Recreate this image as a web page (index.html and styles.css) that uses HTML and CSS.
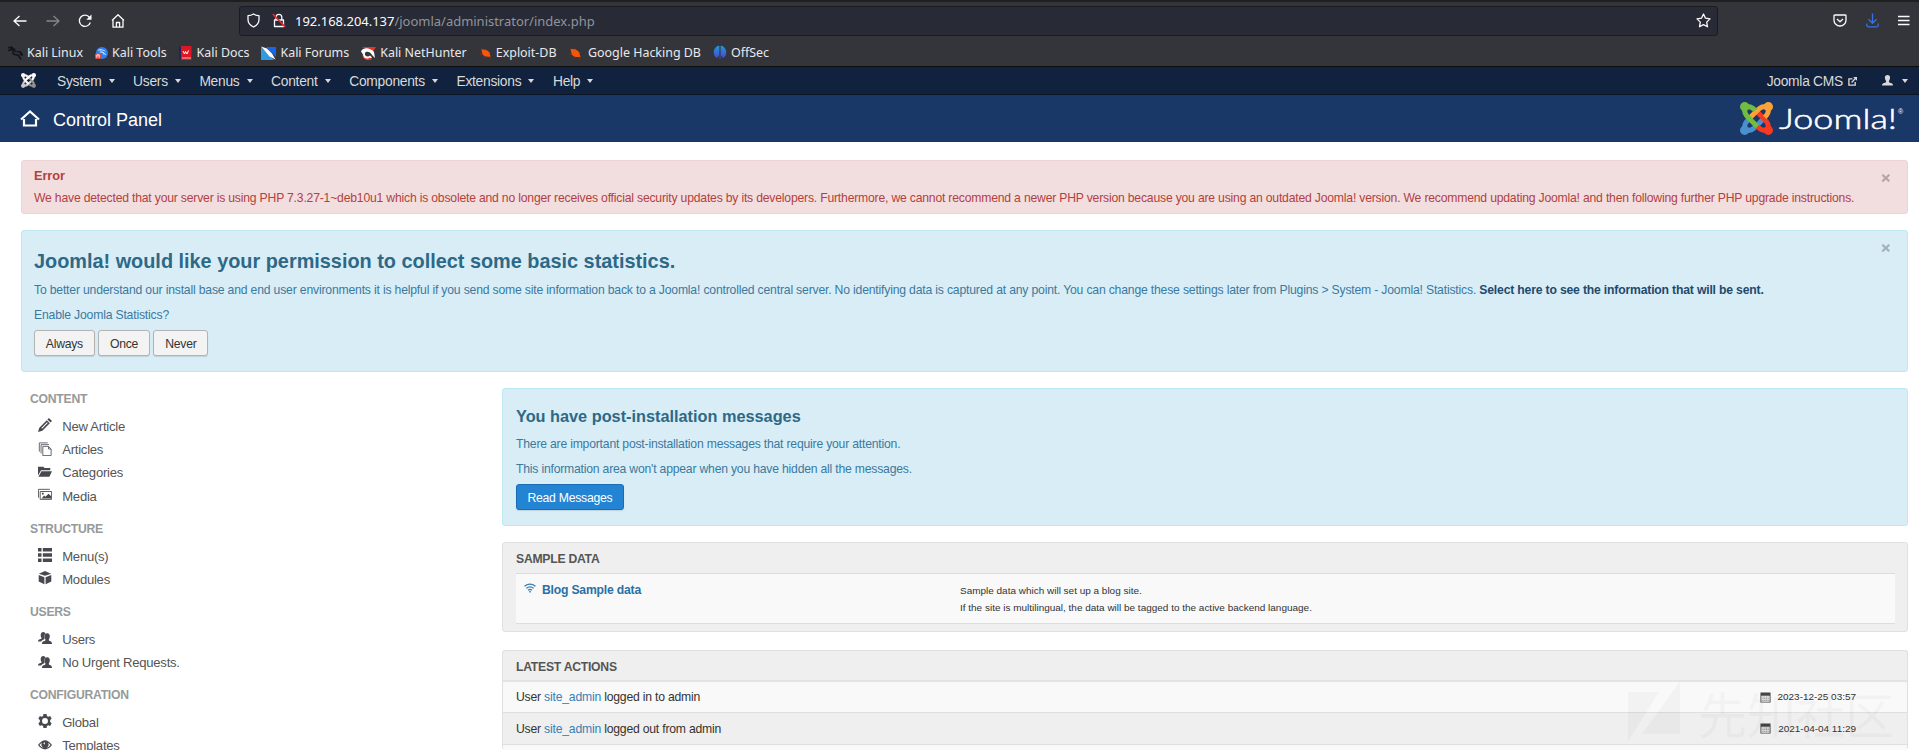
FILE: index.html
```html
<!DOCTYPE html>
<html lang="en">
<head>
<meta charset="utf-8">
<title>Control Panel - Joomla CMS - Administration</title>
<link rel="stylesheet" href="styles.css">
</head>
<body>
<svg class="defs" width="0" height="0">
  <symbol id="users" viewBox="0 0 16 16"><path d="M6 1c1.300 0 2.300.800 2.600 2-1.500 1-1.800 3-1 5.300l-.4 1C5.300 10 4 10.800 3.600 12H0c0-1.900 1.100-2.300 3.800-3.100.4-.3.3-1 0-1.500C2.300 4.700 3.200 1 6 1z"/><path d="M10.500 2.500c3.200 0 3.700 3.700 2.200 6.400-.5.900-.5 1.900.1 2.100 2.300.7 3.200 1.200 3.200 3.900H4.500c0-2.700 1-3.200 3.600-3.900.6-.3.5-1.300 0-2.200C6.800 6.200 7.300 2.500 10.500 2.500z"/></symbol>
  <symbol id="calendar" viewBox="0 0 12 12"><path fill-rule="evenodd" d="M.5.500h11v11H.5zM1.500 4v6.500h9V4z"/><path d="M2.500 5.500h7M2.500 7.300h7M2.500 9.100h7" stroke="#666" stroke-width=".8" stroke-dasharray="1.500 .5" fill="none"/></symbol>
  <symbol id="bug" viewBox="0 0 14 14"><path d="M2.500 2l10 11M1.500 8l4 1M7 2.500l1.500 3M6 12.500l1-3M12 6.500l-3 0" stroke="#8a2f12" fill="none"/><path d="M2.500 3.500C5.500 2.500 9 3.500 10.800 6c1 1.400 1 3 1.700 4.800C9 11.500 5.500 11 4.100 8.700 3.200 7.200 3.300 5.500 2.500 3.500z" fill="#f2570d"/></symbol>
  <symbol id="arm" viewBox="0 0 33 33"><circle cx="4.700" cy="4.700" r="4.700"/><path d="M4.700 4.700C4.200 10.500 5.200 12.500 8.500 15.800L17.200 24.500M4.700 4.700C10 4.200 12 5 15.300 8.300" fill="none" stroke="currentColor" stroke-width="5"/></symbol>
  <symbol id="knot" viewBox="0 0 33 33">
    <use href="#arm" class="c-blue" width="33" height="33" transform="rotate(270 16.500 16.500)"/>
    <use href="#arm" class="c-red" width="33" height="33" transform="rotate(180 16.500 16.500)"/>
    <use href="#arm" class="c-orange" width="33" height="33" transform="rotate(90 16.500 16.500)"/>
    <use href="#arm" class="c-green" width="33" height="33"/>
  </symbol>
</svg>

<div class="browser">
  <div class="toolbar">
    <div class="nav-buttons">
      <svg width="14" height="14" viewBox="0 0 14 14"><path d="M13.500 7H1M6.500 2L1 7l5.500 5"/></svg>
      <svg class="dim" width="14" height="14" viewBox="0 0 14 14"><path d="M.5 7H13M7.500 2L13 7l-5.500 5"/></svg>
      <svg width="14" height="14" viewBox="0 0 14 14"><path d="M12.300 8.500A5.600 5.600 0 1 1 11.500 3.500"/><path d="M13.500.5v5.200H8.300z" fill="#fbfbfe" stroke="none"/></svg>
      <svg width="14" height="14" viewBox="0 0 14 14"><path d="M1 6.500L7 .8l6 5.700M2 6v7.200h10V6M5.400 13V8.500h3.200V13"/></svg>
    </div>
    <div class="urlbar">
      <svg width="13" height="15" viewBox="0 0 13 15"><path d="M6.500 1C5 2 3 2.700 1 2.700v3.800c0 3.500 2 5.800 5.500 7.500C10 12.300 12 10 12 6.500V2.700C10 2.700 8 2 6.500 1z"/></svg>
      <svg width="14" height="15" viewBox="0 0 14 15"><path d="M4 6.500V4.200a2.900 2.900 0 0 1 5.800 0v2.300M2.500 7h9v6.500h-9z"/><path d="M.8 1l12.400 12.800" stroke="#e22a35" stroke-width="1.700"/></svg>
      <span class="url"><b>192.168.204.137</b>/joomla/administrator/index.php</span>
      <svg class="star" width="15" height="15" viewBox="0 0 15 15"><path d="M7.500 1l2 4.200 4.500.7-3.300 3.200.8 4.700-4-2.200-4 2.200.8-4.700L1 5.900l4.500-.7z"/></svg>
    </div>
    <div class="tool-buttons">
      <svg width="14" height="13" viewBox="0 0 14 13"><path d="M1.800 1h10.400q.8 0 .8.800v4.400a6 5.800 0 0 1-12 0V1.800Q1 1 1.800 1z"/><path d="M4 5l3 2.800L10 5"/></svg>
      <svg class="download" width="13" height="15" viewBox="0 0 13 15"><path d="M6.500.5v9.500M2.500 6.300l4 3.900 4-3.900M.8 10.500v1.800q0 1.500 1.500 1.500h8.400q1.500 0 1.500-1.500v-1.800"/></svg>
      <svg width="12" height="11" viewBox="0 0 12 11"><path d="M0 1.500h11.500M0 5.500h11.500M0 9.500h11.500"/></svg>
    </div>
  </div>
  <div class="bookmarks">
    <span class="bm"><svg width="15" height="14" viewBox="0 0 15 14"><path d="M0 1.500l4 .7M2.500.5L7 4M0 4.500l4-.8 4 1.800M4.500 5.500L5.500 8l5 1.500 2.500 4M8.500 5.500l4 .5 2 3-3-1" fill="none" stroke="#141518" stroke-width="1.700"/></svg>Kali Linux</span>
    <span class="bm"><svg width="13" height="14" viewBox="0 0 14 14"><circle cx="7.500" cy="7" r="6.500" fill="#2f80ee"/><path d="M3 4q4-2 8 1M5 6q4-1 7 3M5 3q3 2 5 6" stroke="#bfe2ff" fill="none"/><rect x="0" y="7" width="6.500" height="6.500" rx="2" fill="#e4483c"/><path d="M2 12V9h2.500v3" stroke="#fff" fill="none"/></svg>Kali Tools</span>
    <span class="bm"><svg width="14" height="14" viewBox="0 0 14 14"><path d="M0 1l3-1v14H0z" fill="#23245c"/><path d="M2 0h10.500v14H2z" fill="#dc1622"/><path d="M4 5l1.500 3 1-2.500L8 8l1.500-3.500" stroke="#fff" fill="none"/><path d="M3 12h9" stroke="#f3b6ba" fill="none"/></svg>Kali Docs</span>
    <span class="bm"><svg width="15" height="14" viewBox="0 0 15 14"><path d="M0 1v13h13z" fill="#2f9be6"/><path d="M5 1h10v10z" fill="#1b66e8"/><path d="M0 .5l6 2 5 5 3.500 6-6-3-5-6z" fill="#fff"/></svg>Kali Forums</span>
    <span class="bm"><svg width="15" height="14" viewBox="0 0 15 14"><path d="M1 1h14l-3 5z" fill="#ef3124"/><path d="M0 5.500C2 1 9 1.500 13 6l1 6-3-3c-2-4-6-4-7-2-1 3 3 4.500 5 2.500l2 2c-3 3.500-10 2-9-3z" fill="#fff"/><path d="M2 8c0 5 5 5.500 7 3.500l2 2C6 15 0 13 2 8z" fill="#ef3124"/></svg>Kali NetHunter</span>
    <span class="bm"><svg width="13" height="14"><use href="#bug"/></svg>Exploit-DB</span>
    <span class="bm wide"><svg width="14" height="14"><use href="#bug"/></svg>Google Hacking DB</span>
    <span class="bm"><svg width="14" height="15" viewBox="0 0 14 15"><defs><linearGradient id="og" x2="0" y2="1"><stop stop-color="#1e9ad6"/><stop offset="1" stop-color="#4b43d8"/></linearGradient></defs><path d="M6 .5v10L4 13C-1.300 10 .2 2 6 .5zM8 .5c5.800 1.500 7.300 9.500 2 12.500l-2-2.500zM6.600 1h.8v13h-.8z" fill="url(#og)"/></svg>OffSec</span>
  </div>
</div>

<nav class="navbar">
  <svg class="mark" width="15" height="15"><use href="#knot"/></svg>
  <a class="menu">System</a><a class="menu">Users</a><a class="menu">Menus</a><a class="menu">Content</a><a class="menu">Components</a><a class="menu">Extensions</a><a class="menu">Help</a>
  <a class="site">Joomla CMS <svg width="9" height="9" viewBox="0 0 10 10"><path d="M5 2H1v7h7V5.500M4 6l4.500-4.500" fill="none" stroke="#d9d9d9" stroke-width="1.500"/><path d="M5.700 0H10v4.300z" fill="#d9d9d9"/></svg></a>
  <a class="menu account"><svg width="11" height="11" viewBox="0 0 11 11"><path fill="#d9d9d9" d="M5.500 0C8.300 0 8.700 3 7.200 5.500c-.4.900-.4 1.700.2 2C9.700 8.100 11 8.500 11 10.500H0c0-2 1.300-2.400 3.600-3 .6-.3.600-1.100.2-2C2.300 3 2.700 0 5.500 0z"/></svg></a>
</nav>

<header class="header">
  <svg width="20" height="17" viewBox="0 0 20 17"><path d="M1 9.500L10 1.500l9 8M4 9v6.500h12V9" fill="none" stroke="#fff" stroke-width="2.200"/></svg>
  <h1>Control Panel</h1>
  <svg class="logo" width="167" height="34" viewBox="0 0 167 34">
    <use href="#knot" width="33" height="33"/>
    <text class="wordmark" x="39" y="27" textLength="118" lengthAdjust="spacingAndGlyphs">Joomla!</text>
    <text class="reg" x="158" y="12">®</text>
  </svg>
</header>

<main class="page">
  <section class="alert error">
    <span class="close">×</span>
    <h4>Error</h4>
    <p>We have detected that your server is using PHP 7.3.27-1~deb10u1 which is obsolete and no longer receives official security updates by its developers. Furthermore, we cannot recommend a newer PHP version because you are using an outdated Joomla! version. We recommend updating Joomla! and then following further PHP upgrade instructions.</p>
  </section>
  <section class="alert info stats">
    <span class="close">×</span>
    <h2>Joomla! would like your permission to collect some basic statistics.</h2>
    <p>To better understand our install base and end user environments it is helpful if you send some site information back to a Joomla! controlled central server. No identifying data is captured at any point. You can change these settings later from Plugins &gt; System - Joomla! Statistics. <strong>Select here to see the information that will be sent.</strong></p>
    <p>Enable Joomla Statistics?</p>
    <div class="choices"><button>Always</button><button>Once</button><button>Never</button></div>
  </section>

  <div class="columns">
    <aside class="sidebar">
      <h5>Content</h5>
      <ul>
        <li><svg viewBox="0 0 16 16"><path fill-rule="evenodd" d="M12.500 0L16 3.500 14.300 5.200 10.800 1.700zM10 2.500L13.500 6 5 14.500 0 16l1.500-5zM10.300 4.900L3.800 11.400l.8.800L11.100 5.700z"/></svg>New Article</li>
        <li><svg viewBox="0 0 16 16"><path fill="none" stroke="#555860" d="M5.500 5h6.300L15 8v7.500H5.500zM3.500 13V3h9M1.500 11V1H11M12 5v3h3"/></svg>Articles</li>
        <li><svg viewBox="0 0 16 16"><path d="M0 2h6l1.500 1.500H14V6H3.500L0 12zM4 7h12l-3 6.500H.5z"/></svg>Categories</li>
        <li><svg viewBox="0 0 16 16"><path fill="none" stroke="#48494f" d="M2.500 4h13v9h-13zM.5 11V1.500h13"/><path d="M4 12l3-3.500 1.500 1.500L12 6.500l3 3V12zM4.500 5.500h2v2h-2z"/></svg>Media</li>
      </ul>
      <h5>Structure</h5>
      <ul>
        <li><svg viewBox="0 0 16 16"><path d="M0 0h4v4H0zM5.500 0H16v4H5.500zM0 6h4v4H0zM5.500 6H16v4H5.500zM0 12h4v4H0zM5.500 12H16v4H5.500z"/></svg>Menu(s)</li>
        <li><svg viewBox="0 0 16 16"><path d="M8 0l7 3-7 2.500L1 3zM.8 4.500L7.300 7v8L.8 12zM15.200 4.500L8.700 7v8l6.500-3z"/></svg>Modules</li>
      </ul>
      <h5>Users</h5>
      <ul>
        <li><svg><use href="#users"/></svg>Users</li>
        <li><svg><use href="#users"/></svg>No Urgent Requests.</li>
      </ul>
      <h5>Configuration</h5>
      <ul>
        <li><svg viewBox="0 0 16 16"><path fill-rule="evenodd" d="M6.200 0h3.600l.4 2.200 1.500.9 2.200-.8 1.700 3-1.700 1.600v2.200l1.700 1.600-1.700 3-2.200-.8-1.500.9-.4 2.200H6.200l-.4-2.200-1.500-.9-2.200.8-1.700-3 1.700-1.600V6.900L.4 5.300l1.700-3 2.200.8 1.500-.9zM8 4.600a3.400 3.400 0 1 0 0 6.800 3.400 3.400 0 0 0 0-6.800z"/></svg>Global</li>
        <li><svg viewBox="0 0 16 16"><path fill-rule="evenodd" d="M0 8q8-11 16 0-8 10-16 0zm1.700 0q2.300 3 5 3.300a4 4 0 0 1-2-6.300Q2.900 6.100 1.700 8zM14.300 8q-1.200-1.900-3-3a4 4 0 0 1-2 6.300q2.700-.3 5-3.300zM7.500 4.500L6 6.500l2 1z"/></svg>Templates</li>
      </ul>
    </aside>

    <div class="content">
      <section class="alert info postinstall">
        <h3>You have post-installation messages</h3>
        <p>There are important post-installation messages that require your attention.</p>
        <p>This information area won't appear when you have hidden all the messages.</p>
        <button class="primary">Read Messages</button>
      </section>

      <section class="well sample">
        <h5>Sample Data</h5>
        <div class="sample-row">
          <a><svg width="12" height="10" viewBox="0 0 12 10"><path d="M.5 3.300q5.500-4.500 11 0M2.300 5.300q3.700-3 7.400 0M4 7.200q2-1.500 4 0" fill="none" stroke="#3a7fb0" stroke-width="1.200"/><circle cx="6" cy="8.700" r=".9" fill="#3a7fb0"/></svg>Blog Sample data</a>
          <p>Sample data which will set up a blog site.<br>If the site is multilingual, the data will be tagged to the active backend language.</p>
        </div>
      </section>

      <section class="well actions">
        <h5>Latest Actions</h5>
        <div class="action first"><span>User <a>site_admin</a> logged in to admin</span><time><svg width="11" height="11"><use href="#calendar"/></svg>2023-12-25 03:57</time></div>
        <div class="action"><span>User <a>site_admin</a> logged out from admin</span><time><svg width="11" height="11"><use href="#calendar"/></svg>2021-04-04 11:29</time></div>
        <div class="action last"></div>
      </section>
    </div>
  </div>
</main>

<div class="watermark">
  <svg width="53" height="63" viewBox="0 0 53 63"><path d="M0 11h31L0 61zM52 0v53H14z"/></svg>
  <span>先知社区</span>
</div>
</body>
</html>
```
FILE: styles.css
```css
* { box-sizing: border-box; }
html { height: 750px; overflow: hidden; }
body { height: 750px; overflow: hidden; margin: 0; background: #fff; color: #333; font: 12.2px/18px "Liberation Sans", sans-serif; letter-spacing: -.205px; position: relative; }
h1, h2, h3, h4, h5, p, ul { margin: 0; padding: 0; }
svg { display: block; flex: none; }
.defs { position: absolute; }
.c-green { fill: #72bc43; color: #72bc43; }
.c-orange { fill: #fba33b; color: #fba33b; }
.c-red { fill: #f43a23; color: #f43a23; }
.c-blue { fill: #4a90cf; color: #4a90cf; }

/* Browser chrome */
.browser { height: 67px; border-top: 2px solid #1f1f1f; border-bottom: 1px solid #0c0c0d; background: #33353b; color: #fbfbfe; font-family: "Noto Sans", sans-serif; letter-spacing: 0; }
.toolbar { display: flex; align-items: center; height: 36px; padding: 0 9px 0 13px; }
.toolbar svg { fill: none; stroke: #fbfbfe; stroke-width: 1.3; stroke-linejoin: round; }
.toolbar svg.dim { stroke: #85868a; }
.toolbar svg.download { stroke: #3573e6; }
.nav-buttons { display: flex; gap: 18.500px; width: 226px; margin-top: 1px; }
.urlbar { display: flex; align-items: center; width: 1479px; height: 30px; padding: 0 6px 0 7px; border: 1px solid #1c1b22; border-radius: 3px; background: #282a35; margin-top: 1px; }
.urlbar svg + svg { margin-left: 12px; }
.url { margin-left: 9px; font-size: 12.98px; color: #93949b; }
.url b { font-weight: 400; color: #fbfbfe; }
.urlbar .star { margin-left: auto; }
.tool-buttons { display: flex; align-items: center; gap: 19px; margin-left: auto; }
.bookmarks { display: flex; align-items: center; height: 28px; padding: 1px 0 0 8px; gap: 12px; color: #e9e9ec; font-size: 12.45px; }
.bm { display: flex; align-items: center; gap: 4px; white-space: nowrap; }
.bm.wide { gap: 5.500px; }

/* Admin menu */
.navbar { display: flex; align-items: center; height: 28px; padding: 2px 11px 0 21px; background: #10223e; border-bottom: 1px solid #0b1524; color: #d9d9d9; font-size: 13.8px; letter-spacing: -.26px; }
.mark { margin: -2px 21px 0 0; filter: saturate(0) brightness(1.5); }
.menu { display: flex; align-items: center; margin-right: 18.500px; }
.menu::after { content: ""; margin: -1px 0 0 7.100px; border: 3.500px solid transparent; border-top: 4px solid #d9d9d9; border-bottom: 0; }
.site { display: flex; align-items: center; gap: 5px; margin: 0 24.500px 0 auto; }
.site svg { margin-top: -1px; }
.menu.account { margin-right: 0; }
.account svg { margin-top: -3px; }
.account::after { margin-left: 9.500px; }

/* Title bar */
.header { display: flex; align-items: center; height: 47px; padding: 0 12px 0 20px; background: #1a3867; color: #fff; letter-spacing: 0; }
.header h1 { margin: 2px 0 0 13px; font-size: 18px; font-weight: 400; line-height: 24px; }
.logo { margin: 0 0 0 auto; }
.wordmark { font: 300 27px "Lato", sans-serif; fill: #fff; stroke: #fff; stroke-width: .5px; }
.reg { font: 7px "Liberation Sans", sans-serif; fill: #fff; }

/* Alerts */
.page { padding: 18px 11px 0 21px; }
.alert { position: relative; border: 1px solid; border-radius: 3px; padding: 0 12px; }
.error { height: 54px; padding-top: 6px; background: #f2dede; border-color: #eed3d7; color: #b3413f; }
.error h4 { font-size: 12.8px; line-height: 18px; letter-spacing: -.1px; }
.error p { margin-top: 4px; white-space: nowrap; letter-spacing: -.199px; }
.info { background: #d9edf6; border-color: #bce8f1; color: #3a7a9f; }
.stats { height: 142px; margin-top: 16px; padding-top: 17px; }
.info h2, .info h3 { color: #2d6987; letter-spacing: 0; }
.info h2 { font-size: 19.88px; line-height: 26px; }
.stats p { margin-top: 7px; white-space: nowrap; letter-spacing: -.182px; }
.stats strong { color: #1f4a6c; }
.close { position: absolute; top: 7px; right: 17px; font-size: 15.500px; font-weight: 700; line-height: 20px; color: #000; opacity: .25; -webkit-text-stroke: .5px #000; }
.choices { display: flex; gap: 3.500px; margin-top: 6px; }
button { height: 26px; padding: 1px 10.800px 0; border: 1px solid #b3b3b3; border-radius: 3px; background: #f3f3f3; color: #333; font: 12.2px "Liberation Sans", sans-serif; letter-spacing: -.25px; box-shadow: 0 1px 1px rgba(0,0,0,.12); }
.primary { padding: 1px 10.500px 0; background: #2384d3; border-color: #1a6cb5; color: #fff; }

/* Layout */
.columns { display: flex; margin-top: 16px; }
.sidebar { width: 481px; padding: 1px 0 0 9px; }
.sidebar h5 { margin-bottom: 6px; color: #969a9a; font-size: 12.2px; letter-spacing: -.25px; line-height: 20px; text-transform: uppercase; }
.sidebar ul { margin-bottom: 10.300px; list-style: none; }
.sidebar li { display: flex; align-items: center; height: 23.400px; padding: 0 0 0 8px; font-size: 13.1px; letter-spacing: -.25px; color: #555; }
.sidebar li svg { width: 14px; height: 14px; margin: -3px 10.200px 0 0; fill: #48494f; }
.content { flex: 1; }

.postinstall { height: 138px; padding: 15px 13px 0; }
.info h3 { font-size: 16.3px; line-height: 24px; }
.postinstall p { margin-top: 7px; }
.postinstall button { margin-top: 6px; }

.well { border: 1px solid #e0e0e0; border-radius: 3px; background: #efefef; }
.well h5 { font-size: 12.2px; letter-spacing: -.25px; line-height: 18px; color: #555; text-transform: uppercase; }
.sample { height: 90px; margin-top: 16px; padding: 7px 12px 0 13px; }
.sample-row { display: flex; height: 51px; margin-top: 5px; padding: 7px 8px; border: solid #ddd; border-width: 1px 0; background: #f9f9f9; }
.sample-row a { display: flex; width: 436px; gap: 6px; color: #2a70a5; font-weight: 700; }
.sample-row svg { margin-top: 2px; }
.sample-row p { margin-top: 1px; font-size: 9.97px; line-height: 17px; letter-spacing: 0; }
.actions { height: 100px; margin-top: 18px; border-bottom: 0; }
.actions h5 { height: 31px; padding: 7px 13px 0; border-bottom: 2px solid #e3e3e3; }
.action { display: flex; justify-content: space-between; align-items: center; height: 32px; padding: 0 51px 0 13px; border-bottom: 1px solid #dfdfdf; background: #f9f9f9; }
.action.first { height: 31px; }
.action:nth-child(odd) { background: #efefef; }
.action.last { height: 5px; border: 0; background: #f9f9f9; }
.action a { color: #3a7fb5; }
.action time { display: flex; align-items: center; gap: 7px; font-size: 9.95px; letter-spacing: 0; }
.action time svg { fill: #444; }

/* Faint site mark over the lower right corner */
.watermark { position: absolute; left: 1628px; top: 681px; display: flex; gap: 17px; color: #000; opacity: .022; letter-spacing: 0; pointer-events: none; }
.watermark span { font: 49px/63px "Noto Sans CJK SC", sans-serif; white-space: nowrap; }
```
